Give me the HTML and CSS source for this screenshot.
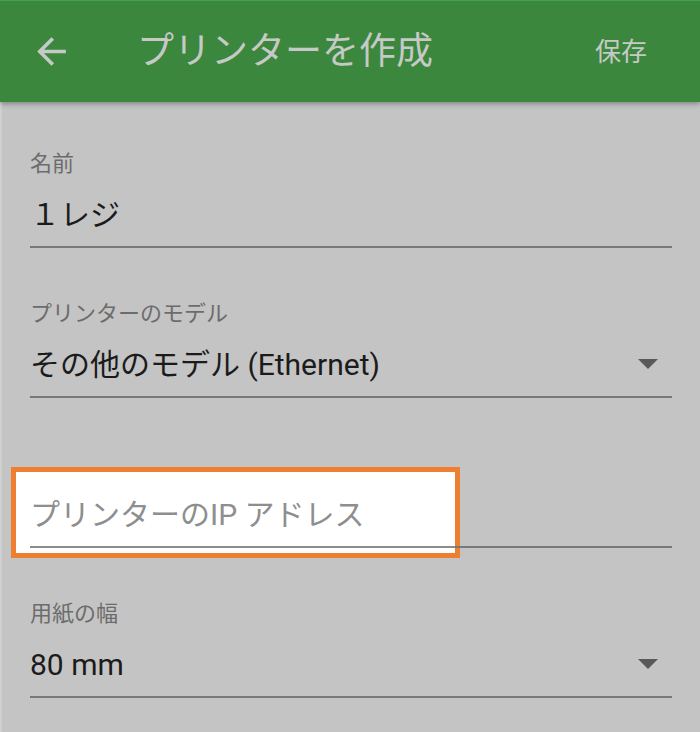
FILE: index.html
```html
<!DOCTYPE html>
<html lang="ja">
<head>
<meta charset="utf-8">
<title>プリンターを作成</title>
<link rel="stylesheet" href="styles.css">
</head>
<body>
<header class="appbar">
  <svg class="back" viewBox="0 0 24 24" aria-hidden="true"><path d="M20 11H7.83l5.59-5.59L12 4l-8 8 8 8 1.41-1.41L7.83 13H20v-2z"/></svg>
  <h1 class="title">プリンターを作成</h1>
  <span class="save">保存</span>
</header>
<main class="form">
  <div class="field">
    <div class="label">名前</div>
    <div class="value-row"><span class="value">１レジ</span></div>
  </div>
  <div class="field">
    <div class="label">プリンターのモデル</div>
    <div class="value-row"><span class="value">その他のモデル (Ethernet)</span><svg class="caret" viewBox="0 0 20 10" aria-hidden="true"><polygon points="0,0 20,0 10,10"/></svg></div>
  </div>
  <div class="field">
    <div class="highlight"></div>
    <div class="label"></div>
    <div class="value-row value-row--focus"><span class="placeholder">プリンターのIP アドレス</span></div>
  </div>
  <div class="field">
    <div class="label">用紙の幅</div>
    <div class="value-row"><span class="value">80 mm</span><svg class="caret" viewBox="0 0 20 10" aria-hidden="true"><polygon points="0,0 20,0 10,10"/></svg></div>
  </div>
</main>
</body>
</html>
```
FILE: styles.css
```css
html, body {
  margin: 0;
  padding: 0;
  background: #c4c4c4;
  font-family: Roboto, "Noto Sans CJK JP", sans-serif;
}

.appbar {
  position: relative;
  z-index: 2;
  box-sizing: border-box;
  height: 102px;
  display: flex;
  align-items: center;
  background: #3b873e;
  border-top: 1px solid #47a04b;
  box-shadow: 0 2px 5px rgba(0, 0, 0, 0.32);
  color: #c6c9c6;
}

.back {
  width: 43px;
  height: 43px;
  margin-left: 30px;
  fill: #c6c9c6;
  flex: none;
}

.title {
  margin: 0 0 0 64px;
  font-size: 37px;
  font-weight: 400;
  line-height: 44px;
  flex: 1;
}

.save {
  font-size: 26px;
  line-height: 32px;
  margin-right: 53px;
}

.form {
  box-sizing: border-box;
  min-height: calc(100vh - 102px);
  display: flex;
  flex-direction: column;
  gap: 51px;
  padding: 47px 28px 0 28px;
  border-left: 2px solid #d0d0d0;
}

.field {
  position: relative;
  display: flex;
  flex-direction: column;
}

.label {
  height: 30px;
  font-size: 22px;
  line-height: 30px;
  color: #6c6c6c;
  margin-bottom: 16px;
}

.value-row {
  position: relative;
  z-index: 1;
  display: flex;
  align-items: center;
  justify-content: space-between;
  padding-bottom: 11px;
  border-bottom: 2px solid #787878;
}

.value-row--focus {
  border-image: linear-gradient(to right, #8c8c8c 0, #8c8c8c 425px, #787878 425px, #787878 100%) 1;
}

.value,
.placeholder {
  font-size: 30px;
  line-height: 40px;
}

.value {
  color: #1b1b1b;
}

.placeholder {
  color: #8e8e8e;
}

.caret {
  width: 20px;
  height: 10px;
  margin-right: 14px;
  margin-bottom: 3px;
  fill: #595959;
}

.highlight {
  position: absolute;
  z-index: 0;
  box-sizing: border-box;
  left: -19px;
  top: 18px;
  width: 449px;
  height: 91px;
  background: #ffffff;
  border: 5px solid #ef7f30;
}
```
